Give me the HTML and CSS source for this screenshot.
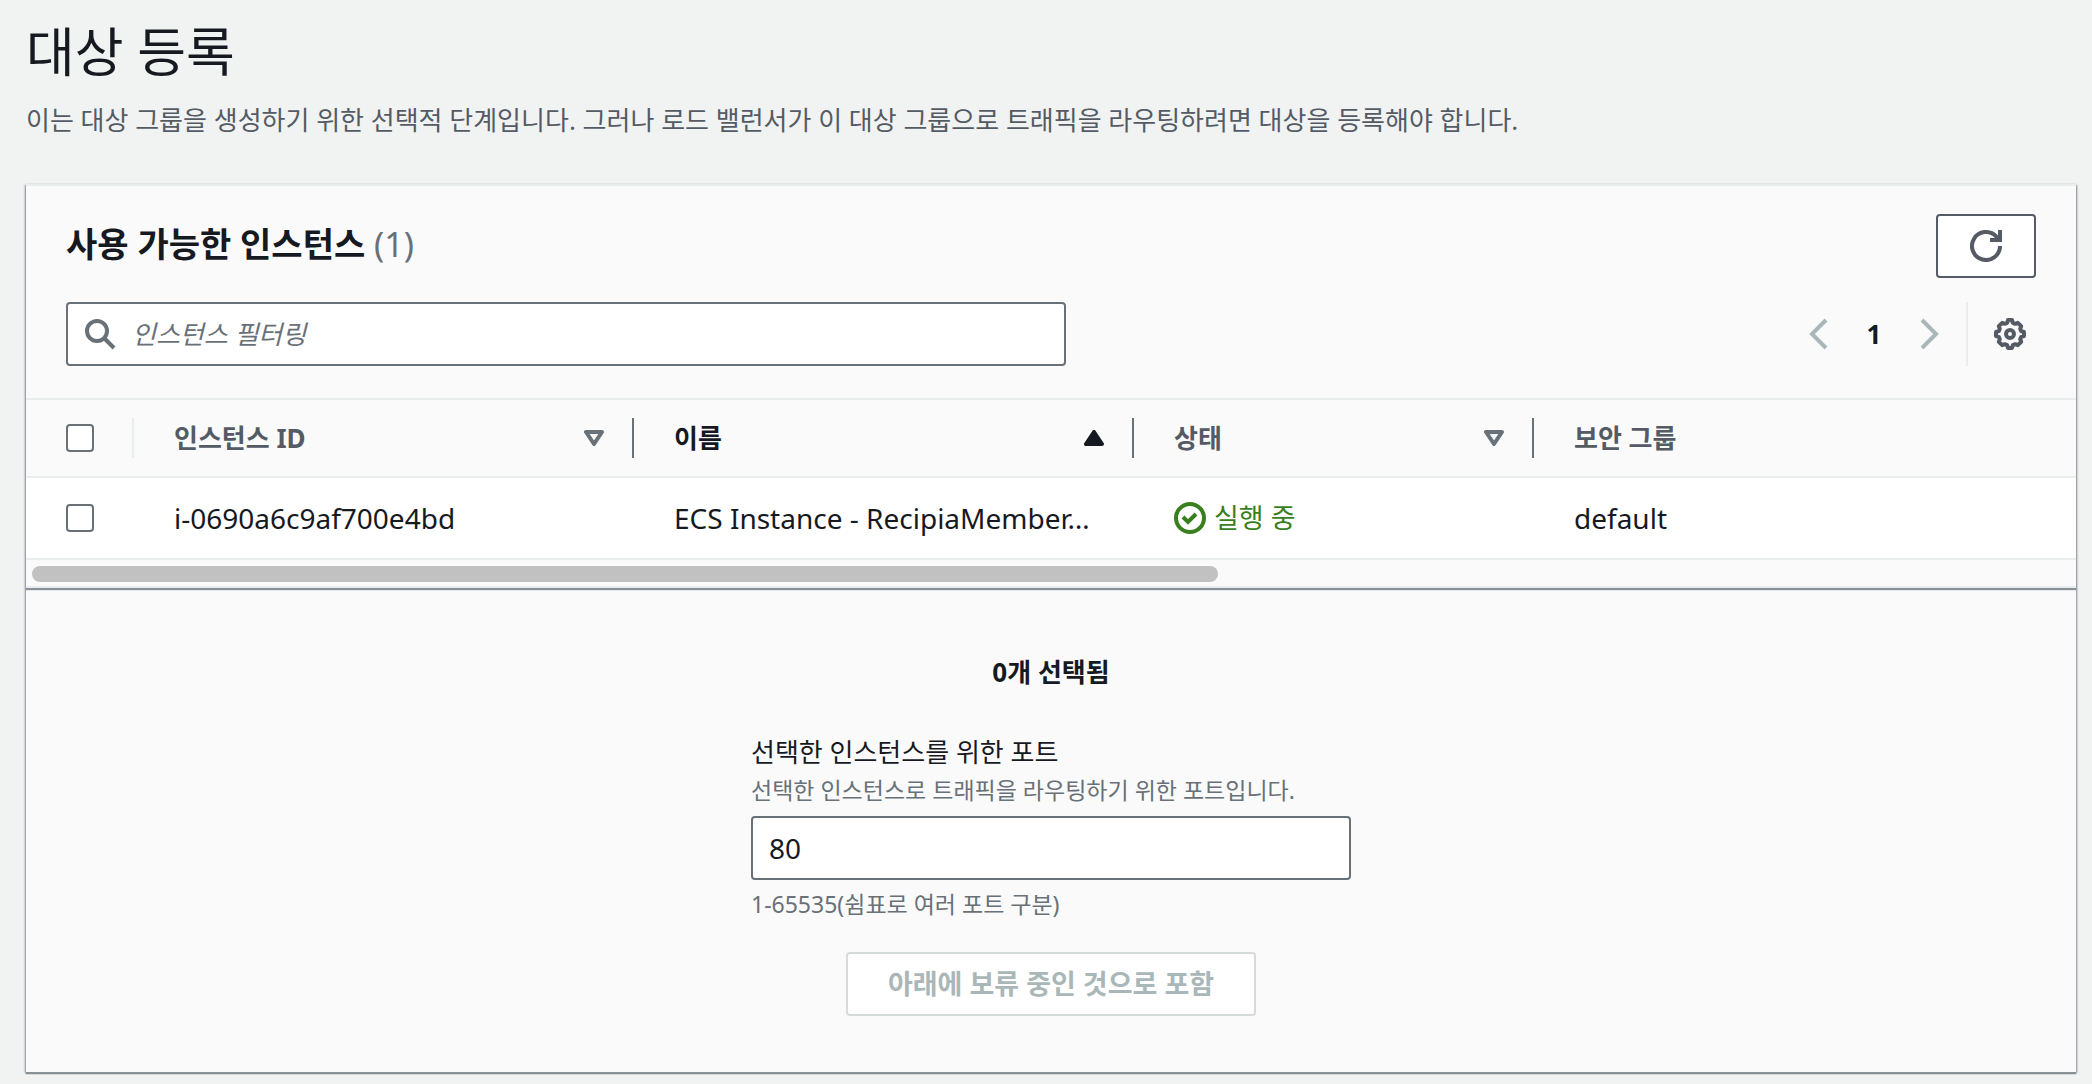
FILE: index.html
```html
<!DOCTYPE html>
<html lang="ko">
<head>
<meta charset="UTF-8">
<title>대상 등록</title>
<link rel="stylesheet" href="styles.css">
</head>
<body>
<header class="page-header">
  <h1>대상 등록</h1>
  <p>이는 대상 그룹을 생성하기 위한 선택적 단계입니다. 그러나 로드 밸런서가 이 대상 그룹으로 트래픽을 라우팅하려면 대상을 등록해야 합니다.</p>
</header>

<main class="panel">
  <section class="instances">
    <div class="title-row">
      <h2>사용 가능한 인스턴스 <span class="counter">(1)</span></h2>
      <button class="btn refresh" type="button" aria-label="새로 고침">
        <svg class="icon" viewBox="0 0 16 16"><path d="M15 8a7 7 0 1 1-2-4.900L14.500 5"/><path d="M15 0v5h-5"/></svg>
      </button>
    </div>
    <div class="tools">
      <label class="search">
        <svg class="icon" viewBox="0 0 16 16"><circle cx="6.500" cy="6.500" r="5"/><path d="m10 10 5 5"/></svg>
        <input type="text" placeholder="인스턴스 필터링" aria-label="인스턴스 필터링">
      </label>
      <div class="pagination">
        <button class="page-btn" type="button" aria-label="이전 페이지" disabled><svg class="icon" viewBox="0 0 16 16"><path d="M12 1 5 8l7 7"/></svg></button>
        <button class="page-btn current" type="button">1</button>
        <button class="page-btn" type="button" aria-label="다음 페이지" disabled><svg class="icon" viewBox="0 0 16 16"><path d="m4 1 7 7-7 7"/></svg></button>
      </div>
      <button class="settings" type="button" aria-label="기본 설정">
        <svg class="icon gear" viewBox="0 0 16 16"><circle cx="8" cy="8" r="2"/><path d="M7 1h2l.4 1.400 1.200.5 1.300-.5 1.700 1.700-.5 1.300.5 1.200L15 7v2l-1.400.4-.5 1.200.5 1.300-1.700 1.700-1.300-.5-1.200.5L9 15H7l-.4-1.400-1.200-.5-1.300.5-1.700-1.700.5-1.300-.5-1.200L1 9V7l1.400-.4.5-1.200-.5-1.300 1.700-1.700 1.300.5 1.200-.5z"/></svg>
      </button>
    </div>
    <table>
      <colgroup>
        <col class="col-check"><col class="col-wide"><col class="col-wide"><col class="col-state"><col>
      </colgroup>
      <thead>
        <tr>
          <th class="check light"><input type="checkbox" aria-label="모두 선택"></th>
          <th><div class="th-inner">인스턴스 ID <svg class="sort" viewBox="0 0 10 8"><path d="M1 1h8L5 7z"/></svg></div></th>
          <th class="sorted"><div class="th-inner">이름 <svg class="sort" viewBox="0 0 10 8"><path d="M1 7h8L5 1z"/></svg></div></th>
          <th><div class="th-inner">상태 <svg class="sort" viewBox="0 0 10 8"><path d="M1 1h8L5 7z"/></svg></div></th>
          <th><div class="th-inner">보안 그룹</div></th>
        </tr>
      </thead>
      <tbody>
        <tr>
          <td class="check"><input type="checkbox" aria-label="i-0690a6c9af700e4bd 선택"></td>
          <td>i-0690a6c9af700e4bd</td>
          <td>ECS Instance - RecipiaMember…</td>
          <td><span class="status"><svg class="icon" viewBox="0 0 16 16"><circle cx="8" cy="8" r="7"/><path d="m4.500 7.500 2.500 2.500 4-4"/></svg>실행 중</span></td>
          <td>default</td>
        </tr>
      </tbody>
    </table>
    <div class="scroll-track"><div class="scroll-thumb"></div></div>
  </section>

  <section class="selection">
    <p class="selected-count">0개 선택됨</p>
    <div class="field">
      <label for="port">선택한 인스턴스를 위한 포트</label>
      <p class="hint">선택한 인스턴스로 트래픽을 라우팅하기 위한 포트입니다.</p>
      <input id="port" type="text" value="80">
      <p class="hint constraint">1-65535(쉼표로 여러 포트 구분)</p>
    </div>
    <button class="btn include" type="button" disabled>아래에 보류 중인 것으로 포함</button>
  </section>
</main>
</body>
</html>
```
FILE: styles.css
```css
* {
  box-sizing: border-box;
}
body {
  margin: 0;
  padding: 22px 16px 10px 26px;
  background: #f1f3f3;
  color: #16191f;
  font-family: "Noto Sans", "Noto Sans CJK KR", sans-serif;
  font-size: 26px;
  line-height: 40px;
}
h1, h2, p {
  margin: 0;
}
button, input {
  font: inherit;
  color: inherit;
}
.icon {
  display: block;
  flex: none;
  width: 32px;
  height: 32px;
  fill: none;
  stroke: currentColor;
  stroke-width: 2;
}

.page-header {
  padding-bottom: 44px;
}
.page-header h1 {
  font-size: 53px;
  font-weight: 400;
  line-height: 60px;
}
.page-header p {
  padding-top: 18px;
  color: #545b64;
}

.panel {
  background: #fafafa;
  border-top: 2px solid #eaeded;
  box-shadow: 0 2px 1px #879196, 1px 1px 2px #8b9398, -1px 1px 2px #8b9398;
}
.instances {
  border-bottom: 2px solid #eaeded;
  box-shadow: 0 2px 1px #879196;
}
.title-row {
  display: flex;
  justify-content: space-between;
  padding: 28px 40px 24px;
}
h2 {
  font-size: 34px;
  font-weight: 700;
  line-height: 60px;
}
.counter {
  color: #687078;
  font-weight: 400;
}
.btn {
  height: 64px;
  border: 2px solid #545b64;
  border-radius: 4px;
  background: #fff;
  color: #545b64;
  font-weight: 700;
}
.refresh {
  display: flex;
  align-items: center;
  justify-content: center;
  width: 100px;
}

.tools {
  display: flex;
  padding: 0 40px 32px;
}
.search {
  display: flex;
  align-items: center;
  width: 1000px;
  height: 64px;
  padding: 0 16px;
  gap: 14px;
  border: 2px solid #687078;
  border-radius: 4px;
  background: #fff;
  color: #687078;
}
.search input {
  flex: 1;
  border: 0;
  outline: 0;
  background: none;
}
.search input::placeholder {
  color: #687078;
  font-style: italic;
}
.pagination {
  display: flex;
  align-items: center;
  margin-left: auto;
  padding-right: 8px;
  border-right: 2px solid #eaeded;
}
.page-btn {
  display: flex;
  align-items: center;
  justify-content: center;
  width: 56px;
  padding: 0;
  border: 0;
  background: none;
  color: #aab7b8;
}
.page-btn.current {
  color: #16191f;
  font-weight: 700;
}
.settings {
  display: flex;
  align-items: center;
  padding: 0 10px 0 26px;
  border: 0;
  background: none;
  color: #545b64;
}
.gear {
  stroke-linejoin: round;
}

table {
  width: 100%;
  table-layout: fixed;
  border-collapse: separate;
  border-spacing: 0;
}
.col-check {
  width: 108px;
}
.col-wide {
  width: 500px;
}
.col-state {
  width: 400px;
}
th, td {
  padding: 18px 0;
  text-align: left;
  white-space: nowrap;
}
th {
  border-top: 2px solid #eaeded;
  border-bottom: 2px solid #eaeded;
  color: #545b64;
  font-weight: 700;
}
th.sorted {
  color: #16191f;
}
.th-inner {
  display: flex;
  align-items: center;
  justify-content: space-between;
  height: 40px;
  padding: 0 28px 0 40px;
  border-right: 2px solid #687078;
}
th:last-child .th-inner {
  border-right: 0;
}
.sort {
  width: 20px;
  height: 16px;
  fill: none;
  stroke: #687078;
  stroke-width: 2;
  stroke-linejoin: round;
}
.sorted .sort {
  fill: #16191f;
  stroke: #16191f;
}
td {
  height: 82px;
  padding-left: 40px;
  border-bottom: 2px solid #eaeded;
  background: #fff;
  font-size: 28px;
}
.check {
  padding-left: 40px;
}
.light {
  background: linear-gradient(#eaeded, #eaeded) right center / 2px 40px no-repeat;
}
input[type="checkbox"] {
  appearance: none;
  display: block;
  width: 28px;
  height: 28px;
  margin: 0;
  border: 2px solid #687078;
  border-radius: 4px;
  background: #fff;
}
.status {
  display: flex;
  align-items: center;
  gap: 8px;
  color: #3a7f1e;
  font-size: 27px;
}
.scroll-track {
  padding: 6px 6px 4px;
}
.scroll-thumb {
  width: 58.2%;
  height: 16px;
  border-radius: 8px;
  background: #c1c1c1;
}

.selection {
  display: flex;
  flex-direction: column;
  align-items: center;
  padding: 64px 40px 56px;
}
.selected-count {
  font-weight: 700;
}
.field {
  width: 600px;
  padding: 40px 0 30px;
}
.field label {
  display: block;
}
.hint {
  color: #687078;
  font-size: 23px;
  line-height: 36px;
}
.field input {
  width: 100%;
  height: 64px;
  margin: 8px 0 6px;
  padding: 0 16px;
  border: 2px solid #687078;
  border-radius: 4px;
  background: #fff;
  font-size: 28px;
}
.include {
  padding: 0 40px;
  font-size: 27px;
}
.include:disabled {
  border-color: #d5dbdb;
  color: #aab7b8;
}
```
